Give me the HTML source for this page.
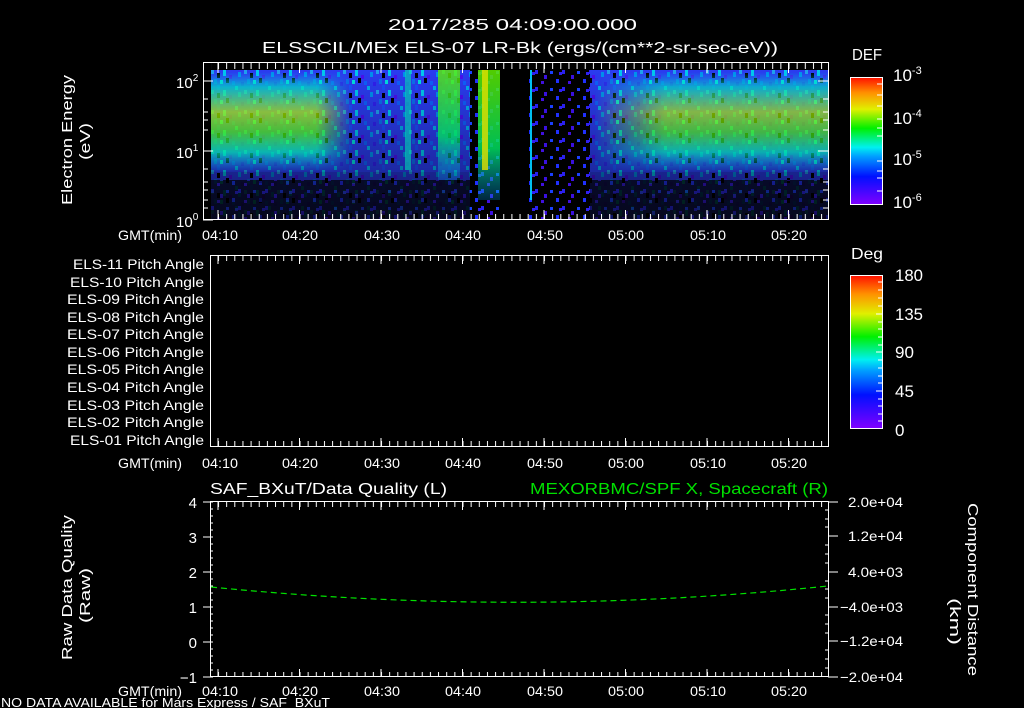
<!DOCTYPE html>
<html><head><meta charset="utf-8"><style>
html,body{margin:0;padding:0;background:#000;}
svg{display:block;}
text{font-family:"Liberation Sans",sans-serif;fill:#fff;}
</style></head><body>
<svg width="1024" height="708" viewBox="0 0 1024 708" xmlns="http://www.w3.org/2000/svg">
<defs>
<pattern id="mt" patternUnits="userSpaceOnUse" x="218" y="0" width="8.15" height="708"><rect x="0" y="0" width="1" height="708" fill="#fff"/></pattern>
<pattern id="noise" patternUnits="userSpaceOnUse" x="211" y="70" width="33" height="20">
<rect width="33" height="20" fill="#2a3cf0"/>
<rect x="0" y="0" width="3" height="4" fill="#1fa0f0"/><rect x="6" y="3" width="3" height="5" fill="#000"/>
<rect x="12" y="0" width="3" height="6" fill="#00c8f0"/><rect x="18" y="5" width="3" height="4" fill="#4a10f0"/>
<rect x="3" y="9" width="3" height="5" fill="#0a70f0"/><rect x="9" y="10" width="3" height="4" fill="#00e0e0"/>
<rect x="15" y="8" width="3" height="5" fill="#000"/><rect x="21" y="11" width="3" height="4" fill="#1060ff"/>
<rect x="27" y="2" width="3" height="5" fill="#0090f0"/><rect x="30" y="12" width="3" height="4" fill="#3020f0"/>
<rect x="24" y="16" width="3" height="4" fill="#00b0f0"/><rect x="6" y="15" width="3" height="5" fill="#1850ff"/>
</pattern>
<pattern id="sparse" patternUnits="userSpaceOnUse" x="211" y="70" width="27" height="17">
<rect width="27" height="17" fill="#000"/>
<rect x="0" y="0" width="3" height="4" fill="#2a20f0"/><rect x="9" y="5" width="3" height="4" fill="#3a10e0"/>
<rect x="15" y="1" width="3" height="3" fill="#1a40ff"/><rect x="6" y="11" width="3" height="3" fill="#4010e0"/>
<rect x="21" y="9" width="3" height="4" fill="#2030ff"/><rect x="24" y="2" width="3" height="3" fill="#3020f0"/>
</pattern>
<linearGradient id="band" x1="0" y1="0" x2="0" y2="1">
<stop offset="0" stop-color="#00d0f0" stop-opacity="0"/>
<stop offset="0.15" stop-color="#00e0c0"/>
<stop offset="0.4" stop-color="#b0f000"/>
<stop offset="0.6" stop-color="#50f000"/>
<stop offset="0.8" stop-color="#00e8a0"/>
<stop offset="1" stop-color="#00c0f0" stop-opacity="0"/>
</linearGradient>
<linearGradient id="fadeL" x1="0" y1="0" x2="1" y2="0">
<stop offset="0" stop-color="#fff"/><stop offset="0.75" stop-color="#fff"/><stop offset="1" stop-color="#fff" stop-opacity="0"/>
</linearGradient>
<linearGradient id="fadeR" x1="0" y1="0" x2="1" y2="0">
<stop offset="0" stop-color="#fff" stop-opacity="0"/><stop offset="0.3" stop-color="#fff"/><stop offset="1" stop-color="#fff"/>
</linearGradient>
<mask id="mL"><rect x="211" y="70" width="140" height="150" fill="url(#fadeL)"/></mask>
<mask id="mR"><rect x="595" y="70" width="233" height="150" fill="url(#fadeR)"/></mask>
<linearGradient id="bot" x1="0" y1="0" x2="0" y2="1">
<stop offset="0" stop-color="#000" stop-opacity="0"/><stop offset="1" stop-color="#000" stop-opacity="0.6"/>
</linearGradient>
<linearGradient id="rain" x1="0" y1="1" x2="0" y2="0">
<stop offset="0" stop-color="#8000ff"/><stop offset="0.22" stop-color="#0010ff"/>
<stop offset="0.38" stop-color="#00a0ff"/><stop offset="0.45" stop-color="#00f0f0"/>
<stop offset="0.6" stop-color="#00f000"/><stop offset="0.75" stop-color="#e0f000"/>
<stop offset="0.88" stop-color="#ff9000"/><stop offset="1" stop-color="#ff1000"/>
</linearGradient>
<linearGradient id="stripe" x1="0" y1="0" x2="0" y2="1">
<stop offset="0" stop-color="#60f000"/><stop offset="0.6" stop-color="#00e060"/><stop offset="1" stop-color="#00a0f0" stop-opacity="0.3"/>
</linearGradient>
</defs>

<text x="388" y="30" font-size="16" textLength="249" lengthAdjust="spacingAndGlyphs">2017/285 04:09:00.000</text>
<text x="262" y="53" font-size="16" textLength="516" lengthAdjust="spacingAndGlyphs">ELSSCIL/MEx ELS-07 LR-Bk  (ergs/(cm**2-sr-sec-eV))</text>

<!-- Panel 1 spectrogram -->
<rect x="211" y="70" width="617" height="150" fill="url(#noise)"/>
<rect x="211" y="180" width="617" height="40" fill="url(#sparse)" opacity="0.7"/>
<rect x="211" y="70" width="617" height="150" fill="url(#bot)"/>
<g mask="url(#mL)"><rect x="211" y="72" width="140" height="100" fill="url(#band)" opacity="0.9"/></g>
<g mask="url(#mR)"><rect x="595" y="72" width="233" height="100" fill="url(#band)" opacity="0.85"/></g>
<rect x="211" y="72" width="617" height="100" fill="url(#noise)" opacity="0.2"/>
<rect x="470" y="70" width="120" height="150" fill="url(#sparse)"/>
<rect x="500" y="70" width="28" height="150" fill="#000"/>
<rect x="438" y="70" width="22" height="110" fill="url(#stripe)" opacity="0.8"/>
<rect x="478" y="70" width="22" height="130" fill="url(#stripe)" opacity="0.85"/>
<rect x="482" y="70" width="6" height="100" fill="#e0e000" opacity="0.8"/>
<rect x="530" y="70" width="2" height="130" fill="#00c0f0"/>
<rect x="405" y="70" width="6" height="100" fill="#00e0b0" opacity="0.6"/>

<!-- Panel 1 axes -->
<rect x="203.5" y="62.5" width="625" height="157" fill="none" stroke="#fff"/>
<rect x="211" y="63" width="617" height="6" fill="url(#mt)"/>
<rect x="211" y="214" width="617" height="6" fill="url(#mt)"/>
<g stroke="#fff">
<path d="M218 63v10M299.5 63v10M381 63v10M462.5 63v10M544 63v10M625.5 63v10M707 63v10M788.5 63v10"/>
<path d="M218 220v-10M299.5 220v-10M381 220v-10M462.5 220v-10M544 220v-10M625.5 220v-10M707 220v-10M788.5 220v-10"/>
<path d="M203 81h10M203 151h10M203 220h10M203 99h5M203 112h5M203 120h5M203 130h5M203 169h5M203 182h5M203 190h5M203 200h5M203 208h5"/>
<path d="M828 81h-10M828 151h-10M828 99h-5M828 112h-5M828 120h-5M828 130h-5M828 169h-5M828 182h-5M828 190h-5M828 200h-5M828 208h-5"/>
</g>
<text x="176" y="88" font-size="15">10<tspan font-size="10" dy="-7">2</tspan></text>
<text x="176" y="158" font-size="15">10<tspan font-size="10" dy="-7">1</tspan></text>
<text x="176" y="227" font-size="15">10<tspan font-size="10" dy="-7">0</tspan></text>
<text transform="translate(72,205) rotate(-90)" font-size="15" textLength="130" lengthAdjust="spacingAndGlyphs">Electron Energy</text>
<text transform="translate(90,160) rotate(-90)" font-size="15" textLength="37" lengthAdjust="spacingAndGlyphs">(eV)</text>

<g font-size="14">
<text x="118" y="240" textLength="64" lengthAdjust="spacingAndGlyphs">GMT(min)</text>
<text x="202" y="240" textLength="36" lengthAdjust="spacingAndGlyphs">04:10</text><text x="282" y="240" textLength="36" lengthAdjust="spacingAndGlyphs">04:20</text><text x="364" y="240" textLength="36" lengthAdjust="spacingAndGlyphs">04:30</text><text x="445" y="240" textLength="36" lengthAdjust="spacingAndGlyphs">04:40</text><text x="527" y="240" textLength="36" lengthAdjust="spacingAndGlyphs">04:50</text><text x="608" y="240" textLength="36" lengthAdjust="spacingAndGlyphs">05:00</text><text x="690" y="240" textLength="36" lengthAdjust="spacingAndGlyphs">05:10</text><text x="771" y="240" textLength="36" lengthAdjust="spacingAndGlyphs">05:20</text>
</g>

<!-- Colorbar 1 -->
<text x="852" y="60" font-size="16" textLength="30" lengthAdjust="spacingAndGlyphs">DEF</text>
<rect x="850.5" y="77.5" width="32" height="127" fill="url(#rain)" stroke="#fff"/>
<g stroke="#fff"><path d="M882 106h-5M882 119h-5M882 128h-5M882 136h-5M882 161h-5M882 171h-5M882 178h-5M882 191h-5M882 84h-5M882 95h-5"/></g>
<g font-size="17"><text x="893" y="81">10<tspan font-size="11" dy="-7">-3</tspan></text><text x="893" y="124">10<tspan font-size="11" dy="-7">-4</tspan></text><text x="893" y="165">10<tspan font-size="11" dy="-7">-5</tspan></text><text x="893" y="208">10<tspan font-size="11" dy="-7">-6</tspan></text></g>

<!-- Panel 2 -->
<rect x="210.5" y="255.5" width="618" height="191" fill="none" stroke="#fff"/>
<rect x="218" y="256" width="610" height="5" fill="url(#mt)"/>
<rect x="218" y="441" width="610" height="5" fill="url(#mt)"/>
<g stroke="#fff">
<path d="M218 256v8M299.5 256v8M381 256v8M462.5 256v8M544 256v8M625.5 256v8M707 256v8M788.5 256v8"/>
<path d="M218 446v-8M299.5 446v-8M381 446v-8M462.5 446v-8M544 446v-8M625.5 446v-8M707 446v-8M788.5 446v-8"/>
</g>
<g font-size="14">
<text x="73" y="269" textLength="131" lengthAdjust="spacingAndGlyphs">ELS-11 Pitch Angle</text><text x="70" y="287" textLength="134" lengthAdjust="spacingAndGlyphs">ELS-10 Pitch Angle</text><text x="67" y="304" textLength="137" lengthAdjust="spacingAndGlyphs">ELS-09 Pitch Angle</text><text x="67" y="322" textLength="137" lengthAdjust="spacingAndGlyphs">ELS-08 Pitch Angle</text><text x="67" y="339" textLength="137" lengthAdjust="spacingAndGlyphs">ELS-07 Pitch Angle</text><text x="67" y="357" textLength="137" lengthAdjust="spacingAndGlyphs">ELS-06 Pitch Angle</text><text x="67" y="374" textLength="137" lengthAdjust="spacingAndGlyphs">ELS-05 Pitch Angle</text><text x="67" y="392" textLength="137" lengthAdjust="spacingAndGlyphs">ELS-04 Pitch Angle</text><text x="67" y="410" textLength="137" lengthAdjust="spacingAndGlyphs">ELS-03 Pitch Angle</text><text x="67" y="427" textLength="137" lengthAdjust="spacingAndGlyphs">ELS-02 Pitch Angle</text><text x="70" y="445" textLength="134" lengthAdjust="spacingAndGlyphs">ELS-01 Pitch Angle</text>
</g>
<g font-size="14">
<text x="118" y="468" textLength="64" lengthAdjust="spacingAndGlyphs">GMT(min)</text>
<text x="202" y="468" textLength="36" lengthAdjust="spacingAndGlyphs">04:10</text><text x="282" y="468" textLength="36" lengthAdjust="spacingAndGlyphs">04:20</text><text x="364" y="468" textLength="36" lengthAdjust="spacingAndGlyphs">04:30</text><text x="445" y="468" textLength="36" lengthAdjust="spacingAndGlyphs">04:40</text><text x="527" y="468" textLength="36" lengthAdjust="spacingAndGlyphs">04:50</text><text x="608" y="468" textLength="36" lengthAdjust="spacingAndGlyphs">05:00</text><text x="690" y="468" textLength="36" lengthAdjust="spacingAndGlyphs">05:10</text><text x="771" y="468" textLength="36" lengthAdjust="spacingAndGlyphs">05:20</text>
</g>

<!-- Colorbar 2 -->
<text x="851" y="259" font-size="16" textLength="32" lengthAdjust="spacingAndGlyphs">Deg</text>
<rect x="850.5" y="275.5" width="32" height="153" fill="url(#rain)" stroke="#fff"/>
<g stroke="#fff"><path d="M882 282h-4M882 290h-4M882 298h-4M882 306h-4M882 314h-6M882 322h-4M882 329h-4M882 337h-4M882 345h-4M882 352h-6M882 360h-4M882 368h-4M882 376h-4M882 383h-4M882 391h-6M882 399h-4M882 406h-4M882 414h-4M882 421h-4"/></g>
<g font-size="17"><text x="895" y="281" textLength="28" lengthAdjust="spacingAndGlyphs">180</text><text x="895" y="320" textLength="28" lengthAdjust="spacingAndGlyphs">135</text><text x="895" y="358">90</text><text x="895" y="397">45</text><text x="895" y="436">0</text></g>

<!-- Panel 3 -->
<text x="210" y="494" font-size="16" textLength="237" lengthAdjust="spacingAndGlyphs">SAF_BXuT/Data Quality (L)</text>
<text x="530" y="494" font-size="16" textLength="298" lengthAdjust="spacingAndGlyphs" style="fill:#00e000">MEXORBMC/SPF X, Spacecraft (R)</text>
<rect x="210.5" y="501.5" width="618" height="175" fill="none" stroke="#fff"/>
<rect x="218" y="502" width="610" height="5" fill="url(#mt)"/>
<rect x="218" y="672" width="610" height="5" fill="url(#mt)"/>
<g stroke="#fff">
<path d="M218 502v8M299.5 502v8M381 502v8M462.5 502v8M544 502v8M625.5 502v8M707 502v8M788.5 502v8"/>
<path d="M218 677v-8M299.5 677v-8M381 677v-8M462.5 677v-8M544 677v-8M625.5 677v-8M707 677v-8M788.5 677v-8"/>
<path d="M203 502h10M203 537h10M203 572h10M203 607h10M203 642h10M203 677h10M210 509h3M210 516h3M210 523h3M210 530h3M210 544h3M210 551h3M210 558h3M210 565h3M210 579h3M210 586h3M210 593h3M210 600h3M210 614h3M210 621h3M210 628h3M210 635h3M210 649h3M210 656h3M210 663h3M210 670h3"/>
<path d="M838 502h-10M838 536h-10M838 572h-10M838 607h-10M838 641h-10M838 677h-10M828 510h-3M828 519h-3M828 527h-3M828 545h-3M828 554h-3M828 563h-3M828 581h-3M828 589h-3M828 598h-3M828 615h-3M828 624h-3M828 633h-3M828 650h-3M828 659h-3M828 668h-3"/>
</g>
<path d="M211 587 Q520 618 828 586" stroke="#00e000" stroke-width="1.2" fill="none" stroke-dasharray="6,4"/>
<g font-size="15" text-anchor="end"><text x="197" y="508">4</text><text x="197" y="543">3</text><text x="197" y="578">2</text><text x="197" y="613">1</text><text x="197" y="648">0</text><text x="197" y="683">−1</text></g>
<g font-size="14"><text x="848" y="507" textLength="55" lengthAdjust="spacingAndGlyphs">2.0e+04</text><text x="848" y="541" textLength="55" lengthAdjust="spacingAndGlyphs">1.2e+04</text><text x="848" y="577" textLength="55" lengthAdjust="spacingAndGlyphs">4.0e+03</text><text x="840" y="612" textLength="63" lengthAdjust="spacingAndGlyphs">−4.0e+03</text><text x="840" y="646" textLength="63" lengthAdjust="spacingAndGlyphs">−1.2e+04</text><text x="840" y="682" textLength="63" lengthAdjust="spacingAndGlyphs">−2.0e+04</text></g>
<text transform="translate(72,660) rotate(-90)" font-size="15" textLength="145" lengthAdjust="spacingAndGlyphs">Raw Data Quality</text>
<text transform="translate(90,623) rotate(-90)" font-size="15" textLength="55" lengthAdjust="spacingAndGlyphs">(Raw)</text>
<text transform="translate(968,503) rotate(90)" font-size="15" textLength="173" lengthAdjust="spacingAndGlyphs">Component Distance</text>
<text transform="translate(950,598) rotate(90)" font-size="15" textLength="47" lengthAdjust="spacingAndGlyphs">(km)</text>
<g font-size="14">
<text x="118" y="696" textLength="64" lengthAdjust="spacingAndGlyphs">GMT(min)</text>
<text x="202" y="696" textLength="36" lengthAdjust="spacingAndGlyphs">04:10</text><text x="282" y="696" textLength="36" lengthAdjust="spacingAndGlyphs">04:20</text><text x="364" y="696" textLength="36" lengthAdjust="spacingAndGlyphs">04:30</text><text x="445" y="696" textLength="36" lengthAdjust="spacingAndGlyphs">04:40</text><text x="527" y="696" textLength="36" lengthAdjust="spacingAndGlyphs">04:50</text><text x="608" y="696" textLength="36" lengthAdjust="spacingAndGlyphs">05:00</text><text x="690" y="696" textLength="36" lengthAdjust="spacingAndGlyphs">05:10</text><text x="771" y="696" textLength="36" lengthAdjust="spacingAndGlyphs">05:20</text>
</g>
<text x="1" y="707" font-size="13" textLength="329" lengthAdjust="spacingAndGlyphs">NO DATA AVAILABLE for Mars  Express / SAF_BXuT</text>
</svg>
</body></html>
